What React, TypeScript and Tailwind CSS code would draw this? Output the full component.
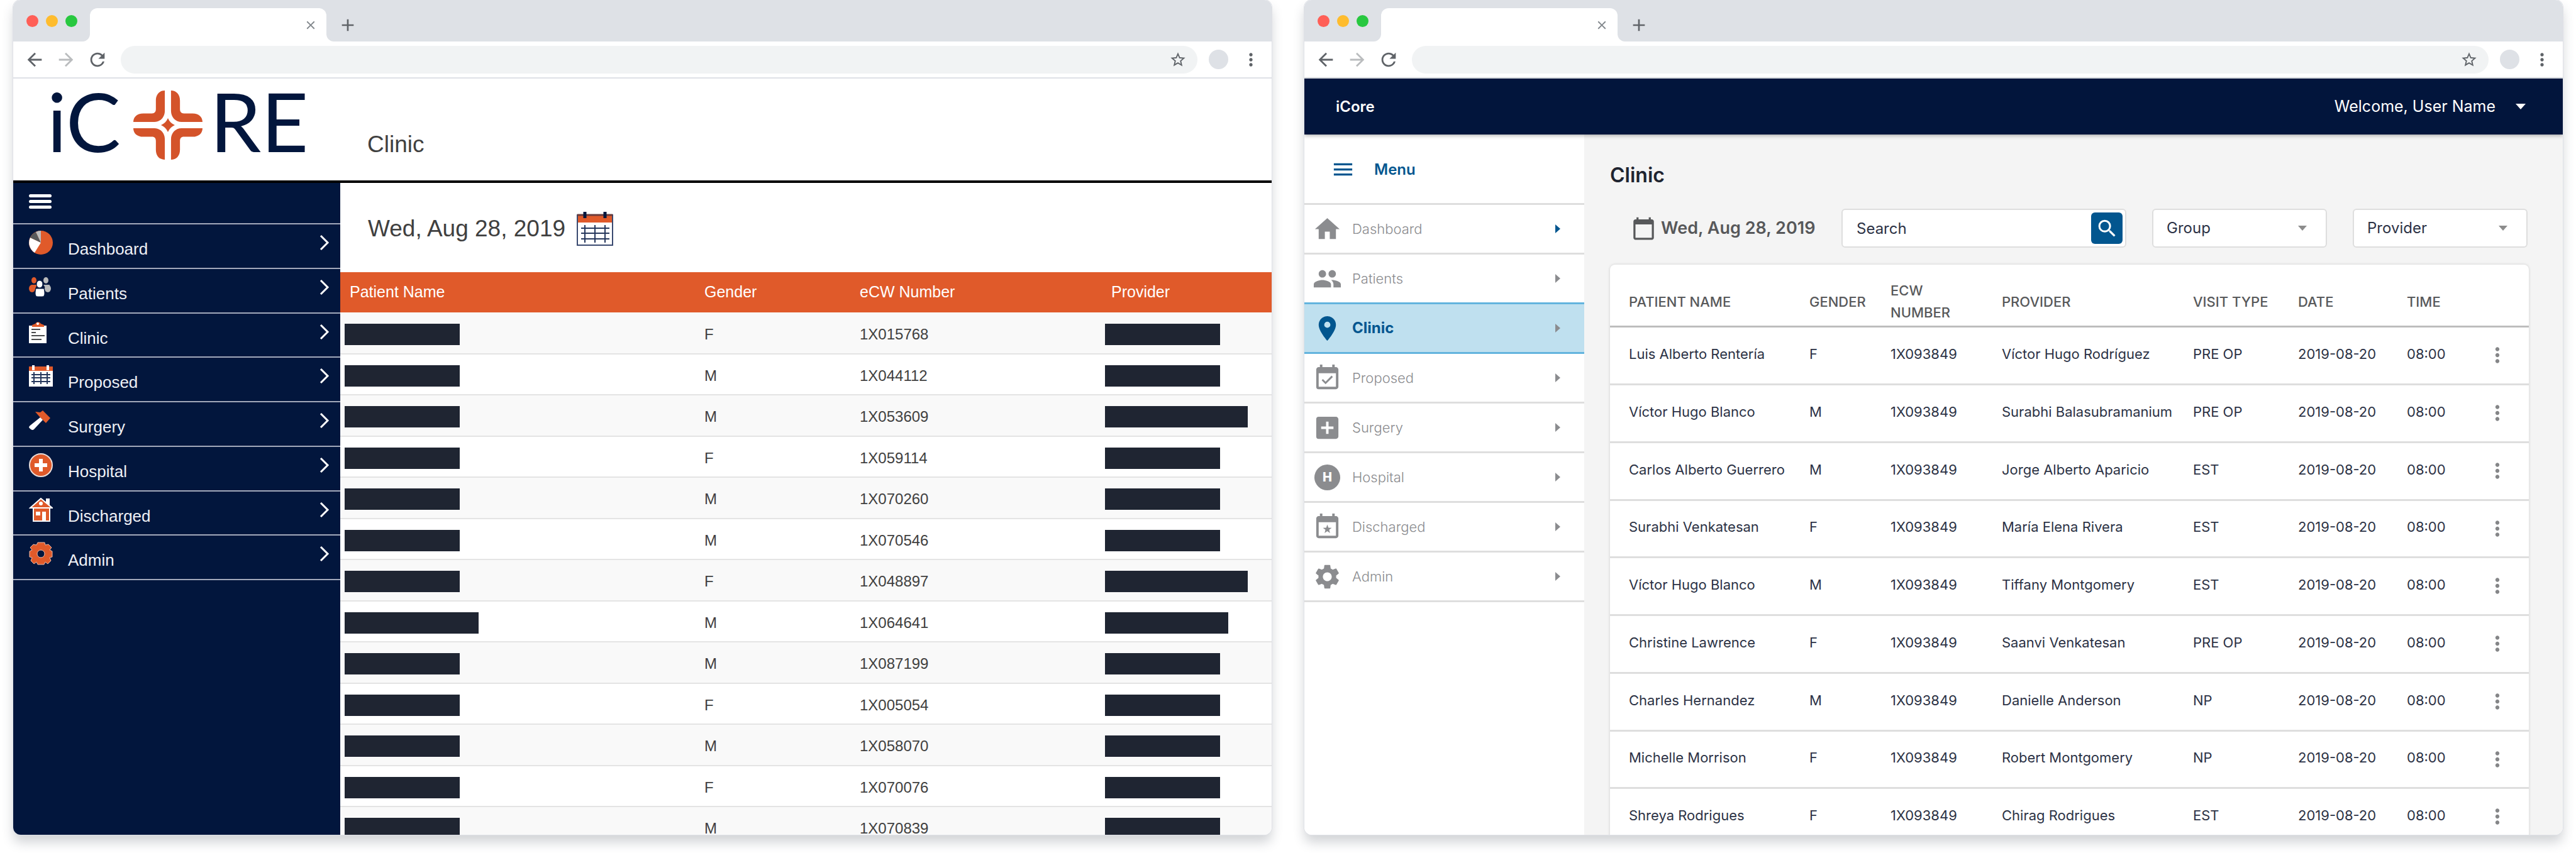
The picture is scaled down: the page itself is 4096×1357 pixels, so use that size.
import type { ReactNode } from "react";
import {
  MdAdd,
  MdAddBox,
  MdArrowBack,
  MdArrowForward,
  MdCalendarToday,
  MdClose,
  MdEventAvailable,
  MdHome,
  MdMenu,
  MdMoreVert,
  MdPeople,
  MdPlace,
  MdRefresh,
  MdSearch,
  MdSettings,
  MdStarBorder,
} from "react-icons/md";

function BrowserWindow({ label, children }: { label: string; children: ReactNode }) {
  return (
    <section
      aria-label={label}
      className="flex min-w-0 flex-1 flex-col overflow-hidden rounded-xl bg-white shadow-[0_0_0_1px_#dfe1e6,0_12px_18px_rgba(50,58,75,0.22)]"
    >
      <div className="flex h-[66px] shrink-0 bg-white text-[#5f6368]">
        <div className="flex w-[122px] items-center gap-3 rounded-br-xl bg-[#dee1e6] pl-[21px]">
          <span className="h-[19px] w-[19px] rounded-full bg-[#ff5f57]" />
          <span className="h-[19px] w-[19px] rounded-full bg-[#febc2e]" />
          <span className="h-[19px] w-[19px] rounded-full bg-[#28c840]" />
        </div>
        <div className="w-[376px] bg-[#dee1e6] pt-[13px]">
          <div className="flex h-full items-center justify-end rounded-t-xl bg-white pr-[14px]">
            <button type="button" aria-label="Close tab" className="text-[#80868b]">
              <MdClose size={22} />
            </button>
          </div>
        </div>
        <div className="flex flex-1 items-center rounded-bl-xl bg-[#dee1e6] pt-[13px] pl-[18px]">
          <button type="button" aria-label="New tab">
            <MdAdd size={32} />
          </button>
        </div>
      </div>
      <div className="flex h-[59px] shrink-0 items-center border-b-2 border-[#dee1e6] pr-[17px] pl-[17px] text-[#5f6368]">
        <div className="flex gap-4">
          <button type="button" aria-label="Back">
            <MdArrowBack size={34} />
          </button>
          <button type="button" aria-label="Forward" className="text-[#babcbe]">
            <MdArrowForward size={34} />
          </button>
          <button type="button" aria-label="Reload">
            <MdRefresh size={34} />
          </button>
        </div>
        <div className="ml-5 flex h-[44px] flex-1 items-center rounded-full bg-[#f1f3f4] pr-[17px]">
          <input aria-label="Address" className="h-full flex-1 bg-transparent pl-6 text-2xl outline-none" />
          <button type="button" aria-label="Bookmark">
            <MdStarBorder size={28} />
          </button>
        </div>
        <span className="ml-[18px] h-[31px] w-[31px] rounded-full bg-[#dee1e6]" />
        <button type="button" aria-label="Browser menu" className="ml-5">
          <MdMoreVert size={32} />
        </button>
      </div>
      {children}
    </section>
  );
}

function CrossLogo() {
  const arm =
    "M183 0V118C183 155 158 183 121 183H0C0 155 20 133 58 133H108C124 133 131 124 131 108V58C131 22 153 0 183 0Z";
  return (
    <svg viewBox="0 0 402 402" className="-mb-3 h-[110px] w-[110px]" fill="#d4532a" aria-hidden="true">
      <path d={arm} />
      <path d={arm} transform="matrix(-1 0 0 1 402 0)" />
      <path d={arm} transform="matrix(1 0 0 -1 0 402)" />
      <path d={arm} transform="matrix(-1 0 0 -1 402 402)" />
      <path d="M201 161Q213 189 241 201Q213 213 201 241Q189 213 161 201Q189 189 201 161Z" />
    </svg>
  );
}

const ORANGE = "#e05a2a";

const legacyIcons: Record<string, ReactNode> = {
  Dashboard: (
    <svg width="38" height="38" viewBox="0 0 38 38">
      <circle cx="19" cy="19" r="19" fill={ORANGE} />
      <path d="M19 19L9 35A19 19 0 0 1 2 11Z" fill="#fff" />
      <path d="M19 19L2 11A19 19 0 0 1 11 2Z" fill="#58595b" />
      <path d="M19 19L11 2A19 19 0 0 1 19 0Z" fill="#bcbdbe" />
    </svg>
  ),
  Patients: (
    <svg width="38" height="31" viewBox="0 0 38 31">
      <g fill={ORANGE}>
        <ellipse cx="8" cy="5" rx="4" ry="5" />
        <ellipse cx="5" cy="18" rx="5" ry="6" />
        <path d="M4 12H13L10 18L6 20Z" />
      </g>
      <g fill="#b9babb">
        <ellipse cx="27" cy="5" rx="4" ry="5" />
        <ellipse cx="30" cy="18" rx="5" ry="6" />
        <path d="M23 12H33L30 21L27 18Z" />
      </g>
      <ellipse cx="17" cy="11" rx="5" ry="6" fill="#fff" stroke="#02163d" />
      <path d="M11 18H24C26 27 25 31 21 31H14C10 31 9 27 11 18Z" fill="#fff" stroke="#02163d" />
    </svg>
  ),
  Clinic: (
    <svg width="38" height="38" viewBox="0 0 38 38">
      <path d="M0 9H28V37H0Z" fill="#fff" />
      <path d="M5 11V8L10 6A5 5 0 0 1 19 6L24 8V11Z" fill={ORANGE} />
      <circle cx="14" cy="6" r="2" fill="#fff" />
      <path d="M4 15H18M4 20H11M4 25H25M4 31H20" stroke="#4b4c4e" strokeWidth="2" />
    </svg>
  ),
  Proposed: (
    <svg width="38" height="34" viewBox="0 0 38 34">
      <path d="M0 2H38V34H0Z" fill="#fff" />
      <path d="M0 2H38V9H0Z" fill={ORANGE} />
      <path d="M7 0V8M30 0V8" stroke="#fff" strokeWidth="4" />
      <path d="M4 15H34M4 20H34M4 26H34M8 11V30M19 11V30M29 11V30" stroke="#26375c" strokeWidth="2" />
    </svg>
  ),
  Surgery: (
    <svg width="38" height="32" viewBox="0 0 38 32">
      <path d="M10 2L18 3L22 0L34 12L27 20L16 9Z" fill={ORANGE} />
      <path d="M18 11L22 15L8 30Q5 33 0 27Q0 25 3 23Z" fill="#fff" />
    </svg>
  ),
  Hospital: (
    <svg width="38" height="38" viewBox="0 0 38 38">
      <circle cx="19" cy="19" r="18" fill={ORANGE} stroke="#e9dcd9" strokeWidth="2" />
      <path d="M19 9V29M9 19H29" stroke="#fff" strokeWidth="6" />
    </svg>
  ),
  Discharged: (
    <svg width="38" height="38" viewBox="0 0 38 38">
      <path d="M27 1H33V14H27Z" fill="#fff" />
      <path d="M7 15H33V37H7Z" fill={ORANGE} stroke="#fff" strokeWidth="2" />
      <path d="M2 16L19 1L37 16Z" fill={ORANGE} stroke="#fff" strokeWidth="2" />
      <circle cx="19" cy="9" r="3" fill="#fff" />
      <path d="M11 22H18V28H11ZM21 22H27V37H21Z" fill="#fff" />
    </svg>
  ),
  Admin: (
    <svg width="38" height="38" viewBox="0 0 38 38" fill={ORANGE}>
      <g stroke="#eeb9a6">
        <path d="M14 1H25L26 5L31 4L36 9L33 13L37 15V24L33 25L35 30L30 35L26 32L24 36H14L12 32L8 35L3 30L5 25L1 24V15L5 13L2 9L7 4L12 5Z" />
        <circle cx="19" cy="19" r="6" fill="#02163d" />
      </g>
    </svg>
  ),
};

function LegacySidebar() {
  return (
    <nav aria-label="Main" className="w-[520px] shrink-0 bg-[#02163d] text-[26px] leading-[30px] text-[#eef0f5]">
      <div className="flex h-[66px] items-start border-b-2 border-[#a3a9bb] pt-[18px] pl-[25px]">
        <button type="button" aria-label="Toggle menu" className="flex flex-col gap-1">
          <span className="h-[5px] w-9 rounded-sm bg-white" />
          <span className="h-[5px] w-9 rounded-sm bg-white" />
          <span className="h-[5px] w-9 rounded-sm bg-white" />
        </button>
      </div>
      <ul className="grid h-[566px] grid-rows-8">
        {Object.entries(legacyIcons).map(([name, icon]) => (
          <li key={name} className="border-b-2 border-[#a3a9bb]">
            <a href="#" className="flex h-full items-start pr-[17px] pl-[25px]">
              <span className="mt-[10px] flex h-[38px] w-[38px] items-center">{icon}</span>
              <span className="mt-6 ml-6 flex-1">{name}</span>
              <svg width="16" height="26" viewBox="0 0 16 26" className="mt-4" fill="none" stroke="#fff" strokeWidth="3">
                <path d="M2 2L13 13L2 24" />
              </svg>
            </a>
          </li>
        ))}
      </ul>
    </nav>
  );
}

function LegacyCalendarIcon() {
  return (
    <svg width="58" height="54" viewBox="0 0 58 54" fill="none">
      <path d="M1 5H57V53H1Z" fill="#fff" stroke="#3a4a70" strokeWidth="2" />
      <path d="M2 5H56V17H2Z" fill={ORANGE} />
      <path d="M1 5H57" stroke="#6b3c3c" strokeWidth="3" />
      <path d="M13 0V10M45 0V10" stroke="#02163d" strokeWidth="5" />
      <path d="M7 26H52M7 34H52M7 43H52M13 21V49M29 21V49M45 21V49" stroke="#26375c" strokeWidth="2" />
    </svg>
  );
}

const NORMAL = "w-[183px]";
const LONG = "w-[227px]";

const legacyRows = [
  { gender: "F", ecw: "1X015768", name: NORMAL, provider: NORMAL },
  { gender: "M", ecw: "1X044112", name: NORMAL, provider: NORMAL },
  { gender: "M", ecw: "1X053609", name: NORMAL, provider: LONG },
  { gender: "F", ecw: "1X059114", name: NORMAL, provider: NORMAL },
  { gender: "M", ecw: "1X070260", name: NORMAL, provider: NORMAL },
  { gender: "M", ecw: "1X070546", name: NORMAL, provider: NORMAL },
  { gender: "F", ecw: "1X048897", name: NORMAL, provider: LONG },
  { gender: "M", ecw: "1X064641", name: "w-[213px]", provider: "w-[196px]" },
  { gender: "M", ecw: "1X087199", name: NORMAL, provider: NORMAL },
  { gender: "F", ecw: "1X005054", name: NORMAL, provider: NORMAL },
  { gender: "M", ecw: "1X058070", name: NORMAL, provider: NORMAL },
  { gender: "F", ecw: "1X070076", name: NORMAL, provider: NORMAL },
  { gender: "M", ecw: "1X070839", name: NORMAL, provider: NORMAL },
];

function Redacted({ width }: { width: string }) {
  return <span className={`block h-[34px] bg-[#1f2532] ${width}`} />;
}

function LegacyApp() {
  return (
    <div className="flex min-h-0 flex-1 flex-col font-['Liberation_Sans',Arial,sans-serif] text-[#404040]">
      <header className="flex h-[166px] shrink-0 items-baseline border-b-4 border-black pt-[2px]">
        <div className="flex w-[563px] items-baseline pl-[54px] font-['Lato',sans-serif] text-[130px] leading-none text-[#02163d]">
          <span>iC</span>
          <span className="mr-3 ml-5">
            <CrossLogo />
          </span>
          <span>RE</span>
        </div>
        <h1 className="text-[37px]">Clinic</h1>
      </header>
      <div className="flex min-h-0 flex-1">
        <LegacySidebar />
        <main className="min-w-0 flex-1 overflow-hidden">
          <div className="flex h-[142px] items-center gap-[18px] pt-1 pl-[44px] text-[37px]">
            <span>Wed, Aug 28, 2019</span>
            <button type="button" aria-label="Pick a date">
              <LegacyCalendarIcon />
            </button>
          </div>
          <table className="w-full table-fixed text-left text-2xl">
            <colgroup>
              <col className="w-[579px]" />
              <col className="w-[247px]" />
              <col className="w-[390px]" />
              <col />
            </colgroup>
            <thead>
              <tr className="h-[64px] bg-[#e05a2a] text-[25px] text-white">
                <th className="pl-[15px] font-normal">Patient Name</th>
                <th className="font-normal">Gender</th>
                <th className="font-normal">eCW Number</th>
                <th className="pl-[10px] font-normal">Provider</th>
              </tr>
            </thead>
            <tbody>
              {legacyRows.map((row) => (
                <tr
                  key={row.ecw}
                  className="h-[65px] border-b-2 border-[#e4e4e4] odd:h-[66px] odd:bg-[#f9f9f9] first:h-[68px]"
                >
                  <td className="pt-1 pl-[7px]">
                    <Redacted width={row.name} />
                  </td>
                  <td className="pt-1">{row.gender}</td>
                  <td className="pt-1">{row.ecw}</td>
                  <td className="pt-1">
                    <Redacted width={row.provider} />
                  </td>
                </tr>
              ))}
            </tbody>
          </table>
        </main>
      </div>
    </div>
  );
}

const menuItems: { name: string; icon: ReactNode; arrow?: string }[] = [
  { name: "Dashboard", icon: <MdHome size={47} />, arrow: "#02568f" },
  { name: "Patients", icon: <MdPeople size={47} /> },
  { name: "Clinic", icon: <MdPlace size={47} /> },
  { name: "Proposed", icon: <MdEventAvailable size={47} /> },
  { name: "Surgery", icon: <MdAddBox size={47} /> },
  {
    name: "Hospital",
    icon: (
      <span className="flex h-[41px] w-[41px] items-center justify-center rounded-full bg-[#8b8c8f] text-xl font-extrabold text-white">
        H
      </span>
    ),
  },
  {
    name: "Discharged",
    icon: (
      <svg width="47" height="47" viewBox="0 0 24 24" fill="currentColor">
        <path
          fillRule="evenodd"
          d="M19 3h-1V1h-2v2H8V1H6v2H5c-1.11 0-1.99.9-1.99 2L3 19c0 1.1.89 2 2 2h14c1.1 0 2-.9 2-2V5c0-1.1-.9-2-2-2zM19 19H5V8h14v11z"
        />
        <path d="M12 9.9L12.9 12.5L15.6 12.6L13.5 14.2L14.2 16.8L12 15.3L9.8 16.8L10.5 14.2L8.4 12.6L11.1 12.5Z" />
      </svg>
    ),
  },
  { name: "Admin", icon: <MdSettings size={47} /> },
];

function Sidebar() {
  return (
    <nav aria-label="Menu" className="w-[445px] shrink-0 bg-white">
      <div className="flex h-[112px] items-center border-b-[3px] border-[#dedede] pt-[2px] pl-[42px]">
        <button type="button" className="flex items-center gap-[30px] text-2xl font-semibold text-[#02568f]">
          <MdMenu size={39} />
          Menu
        </button>
      </div>
      <ul>
        {menuItems.map(({ name, icon, arrow }) => {
          const active = name === "Clinic";
          const tone = active
            ? "border-[#63b4de] bg-[#bfe0ef] text-2xl font-bold text-[#02568f]"
            : name === "Patients"
              ? "border-[#63b4de] text-[22px] font-light text-[#8b8c8f]"
              : "border-[#dedede] text-[22px] font-light text-[#8b8c8f]";
          return (
            <li key={name}>
              <a href="#" aria-current={active ? "page" : undefined} className={`flex h-[79px] items-center border-b-[3px] pr-[38px] pl-[13px] ${tone}`}>
                <span className="flex w-[47px] justify-center">{icon}</span>
                <span className="ml-4 flex-1">{name}</span>
                <svg width="8" height="14" viewBox="0 0 8 14" fill={arrow ?? "#8b8c8f"}>
                  <path d="M0 0L8 7L0 14Z" />
                </svg>
              </a>
            </li>
          );
        })}
      </ul>
    </nav>
  );
}

function FilterSelect({ label }: { label: string }) {
  return (
    <div className="relative w-[278px]">
      <select
        aria-label={label}
        className="h-[62px] w-full appearance-none rounded-md border-2 border-[#dedede] bg-white pl-[21px] text-2xl text-[#2c3245]"
      >
        <option>{label}</option>
      </select>
      <svg width="14" height="8" viewBox="0 0 14 8" fill="#8c8c8c" className="pointer-events-none absolute top-[27px] right-8">
        <path d="M0 0H14L7 8Z" />
      </svg>
    </div>
  );
}

const patients = [
  ["Luis Alberto Rentería", "F", "Víctor Hugo Rodríguez", "PRE OP"],
  ["Víctor Hugo Blanco", "M", "Surabhi Balasubramanium", "PRE OP"],
  ["Carlos Alberto Guerrero", "M", "Jorge Alberto Aparicio", "EST"],
  ["Surabhi Venkatesan", "F", "María Elena Rivera", "EST"],
  ["Víctor Hugo Blanco", "M", "Tiffany Montgomery", "EST"],
  ["Christine Lawrence", "F", "Saanvi Venkatesan", "PRE OP"],
  ["Charles Hernandez", "M", "Danielle Anderson", "NP"],
  ["Michelle Morrison", "F", "Robert Montgomery", "NP"],
  ["Shreya Rodrigues", "F", "Chirag Rodrigues", "EST"],
];

function PatientTable() {
  return (
    <div className="mt-[27px] rounded-t-lg bg-white shadow-[0_0_4px_rgba(0,0,0,0.16)]">
      <table className="w-full table-fixed text-left text-[22px] text-[#2c3245]">
        <colgroup>
          <col className="w-[317px]" />
          <col className="w-[129px]" />
          <col className="w-[177px]" />
          <col />
          <col className="w-[167px]" />
          <col className="w-[173px]" />
          <col className="w-[125px]" />
          <col className="w-[69px]" />
        </colgroup>
        <thead>
          <tr className="h-[98px] border-b-[3px] border-[#bdbdbd] leading-[35px] text-[#58595b]">
            <th className="pt-[22px] pl-[30px] font-medium">PATIENT NAME</th>
            <th className="pt-[22px] font-medium">GENDER</th>
            <th className="pt-[22px] font-medium">
              ECW
              <br />
              NUMBER
            </th>
            <th className="pt-[22px] font-medium">PROVIDER</th>
            <th className="pt-[22px] font-medium">VISIT TYPE</th>
            <th className="pt-[22px] font-medium">DATE</th>
            <th className="pt-[22px] font-medium">TIME</th>
            <th aria-label="Actions" />
          </tr>
        </thead>
        <tbody>
          {patients.map(([name, gender, provider, visit], index) => (
            <tr key={index} className="h-[92px] border-b-[3px] border-[#dedede] nth-[4n]:h-[91px]">
              <td className="pb-1 pl-[30px]">{name}</td>
              <td className="pb-1">{gender}</td>
              <td className="pb-1">1X093849</td>
              <td className="pb-1">{provider}</td>
              <td className="pb-1">{visit}</td>
              <td className="pb-1">2019-08-20</td>
              <td className="pb-1">08:00</td>
              <td>
                <button type="button" aria-label={`Actions for ${name}`} className="block text-[#858688]">
                  <MdMoreVert size={38} />
                </button>
              </td>
            </tr>
          ))}
        </tbody>
      </table>
    </div>
  );
}

function ModernApp() {
  return (
    <div className="flex min-h-0 flex-1 flex-col font-['Inter',sans-serif]">
      <header className="z-10 flex h-[89px] shrink-0 items-center justify-between bg-[#02153c] pr-[59px] pl-[50px] text-white shadow-[0_2px_6px_rgba(0,0,0,0.3)]">
        <span className="text-2xl font-semibold">iCore</span>
        <button type="button" className="flex items-center gap-8 text-[25px]">
          Welcome, User Name
          <svg width="16" height="9" viewBox="0 0 16 9" fill="#fff">
            <path d="M0 0H16L8 9Z" />
          </svg>
        </button>
      </header>
      <div className="flex min-h-0 flex-1">
        <Sidebar />
        <main className="min-w-0 flex-1 overflow-hidden bg-[#f4f4f4] pr-[54px] pl-[41px]">
          <h1 className="pt-[45px] text-[32px] leading-10 font-semibold text-[#1f2430]">Clinic</h1>
          <div className="mt-[33px] flex items-center">
            <button type="button" className="ml-[34px] flex items-center gap-2 text-[27px] font-semibold text-[#57585a]">
              <MdCalendarToday size={39} />
              Wed, Aug 28, 2019
            </button>
            <form className="ml-auto flex h-[62px] w-[453px] items-center rounded-md border-2 border-[#dedede] bg-white pr-1">
              <input
                aria-label="Search"
                placeholder="Search"
                className="h-full min-w-0 flex-1 bg-transparent pl-[22px] text-2xl text-[#2c3245] outline-none placeholder:text-[#2c3245]"
              />
              <button
                type="button"
                aria-label="Run search"
                className="flex h-[50px] w-[50px] items-center justify-center rounded-md bg-[#02568f] text-white"
              >
                <MdSearch size={37} />
              </button>
            </form>
            <div className="mr-[2px] ml-[41px] flex gap-[41px]">
              <FilterSelect label="Group" />
              <FilterSelect label="Provider" />
            </div>
          </div>
          <PatientTable />
        </main>
      </div>
    </div>
  );
}

export default function App() {
  return (
    <div className="flex h-screen gap-[52px] overflow-hidden bg-white px-[21px] pb-[29px]">
      <BrowserWindow label="Previous design">
        <LegacyApp />
      </BrowserWindow>
      <BrowserWindow label="New design">
        <ModernApp />
      </BrowserWindow>
    </div>
  );
}
